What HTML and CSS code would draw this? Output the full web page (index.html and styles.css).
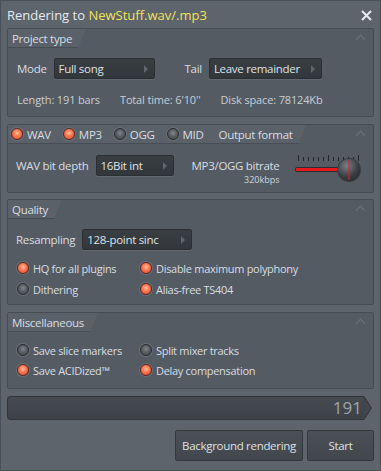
FILE: index.html
```html
<!DOCTYPE html>
<html lang="en">
<head>
    <meta charset="UTF-8">
    <title>Rendering</title>
    <link rel="stylesheet" href="styles.css">
</head>
<body>
<div class="ventana">
    <!-- Barra de titulo -->
    <div class="titulo">
        <span>Rendering to <span class="archivo">NewStuff.wav/.mp3</span></span>
        <svg class="cerrar" width="11" height="11" viewBox="0 0 11 11"><path d="M1 1L10 10M10 1L1 10" stroke="#e8ecf0" stroke-width="2"/></svg>
    </div>

    <!-- Project type -->
    <div class="panel p1">
        <div class="cabecera">
            <div class="pestana">Project type</div>
            <span class="chevron"></span>
        </div>
        <div class="fila modo">
            <span>Mode</span>
            <div class="selector s-modo">Full song<i></i></div>
            <span class="tail">Tail</span>
            <div class="selector s-tail">Leave remainder<i></i></div>
        </div>
        <div class="fila info">
            <span>Length: 191 bars</span>
            <span>Total time: 6'10''</span>
            <span>Disk space: 78124Kb</span>
        </div>
    </div>

    <!-- Output format -->
    <div class="panel p2">
        <div class="cabecera">
            <div class="pestana ancha">
                <label><b class="led on"></b>WAV</label>
                <label><b class="led on"></b>MP3</label>
                <label><b class="led"></b>OGG</label>
                <label><b class="led"></b>MID</label>
                <span class="etiqueta">Output format</span>
            </div>
            <span class="chevron"></span>
        </div>
        <div class="fila formato">
            <span class="alto">WAV bit depth</span>
            <div class="selector s-bits">16Bit int<i></i></div>
            <div class="bitrate">
                <span>MP3/OGG bitrate</span>
                <small>320kbps</small>
            </div>
            <svg class="slider" width="68" height="32" viewBox="0 0 68 32">
                <g stroke="#23272b" stroke-width="1">
                    <path d="M3.5 3v6M8.5 5v4M13.5 5v4M18.5 5v4M23.5 5v4M28.5 5v4M33.5 3v6M38.5 5v4M43.5 5v4M48.5 5v4M53.5 5v4M58.5 5v4M63.5 3v6"/>
                </g>
                <rect x="0" y="15" width="52" height="5" rx="2" fill="#2a2e32"/>
                <rect x="1" y="16" width="50" height="3" fill="#e8191c"/>
                <defs>
                    <radialGradient id="perilla" cx="0.4" cy="0.3" r="0.8">
                        <stop offset="0" stop-color="#7a8088"/>
                        <stop offset="0.6" stop-color="#3c4146"/>
                        <stop offset="1" stop-color="#25292d"/>
                    </radialGradient>
                </defs>
                <circle cx="54" cy="18" r="12" fill="#3a3f44"/>
                <circle cx="54" cy="18" r="11" fill="url(#perilla)"/>
                <path d="M54 8v20" stroke="#e8191c" stroke-width="1"/>
            </svg>
        </div>
    </div>

    <!-- Quality -->
    <div class="panel p3">
        <div class="cabecera">
            <div class="pestana">Quality</div>
            <span class="chevron"></span>
        </div>
        <div class="fila remuestreo">
            <span>Resampling</span>
            <div class="selector s-resamp">128-point sinc<i></i></div>
        </div>
        <div class="opciones">
            <label><b class="led on"></b>HQ for all plugins</label>
            <label><b class="led on"></b>Disable maximum polyphony</label>
            <label><b class="led"></b>Dithering</label>
            <label><b class="led on"></b>Alias-free TS404</label>
        </div>
    </div>

    <!-- Miscellaneous -->
    <div class="panel p4">
        <div class="cabecera">
            <div class="pestana">Miscellaneous</div>
            <span class="chevron"></span>
        </div>
        <div class="opciones">
            <label><b class="led"></b>Save slice markers</label>
            <label><b class="led"></b>Split mixer tracks</label>
            <label><b class="led on"></b>Save ACIDized™</label>
            <label><b class="led on"></b>Delay compensation</label>
        </div>
    </div>

    <!-- Progreso -->
    <div class="progreso">
        <div class="barra">191</div>
        <svg width="9" height="24" viewBox="0 0 9 24"><path d="M0 0.5H1L8.5 12L1 23.5H0" fill="#41464c" stroke="#30353a"/></svg>
    </div>

    <!-- Botones -->
    <div class="botones">
        <button>Background rendering</button>
        <button class="start">Start</button>
    </div>
</div>
</body>
</html>
```

FILE: styles.css
```css
/* Ventana principal */
body {
    margin: 0;
    font-family: "Open Sans", "Noto Sans", sans-serif;
    font-size: 11.5px;
    letter-spacing: -0.3px;
    color: #d8dde2;
}

.ventana {
    width: 381px;
    height: 471px;
    background-color: #5d646c;
    box-sizing: border-box;
    border: 1px solid #4a5057;
    display: flex;
    flex-direction: column;
}

/* Titulo */
.titulo {
    height: 27px;
    display: flex;
    align-items: center;
    justify-content: space-between;
    padding: 0 8px 0 6px;
    font-size: 13px;
    letter-spacing: 0;
    color: #e6eaee;
}
.archivo {
    color: #f2e25a;
}
.cerrar {
    margin-top: 1px;
}

/* Paneles */
.panel {
    margin: 0 6px 0 6px;
    background-color: #545b63;
    border: 1px solid #464c53;
    border-radius: 2px;
    display: flex;
    flex-direction: column;
}
.p1 { height: 87px; }
.p2 { height: 67px; margin-top: 7px; }
.p3 { height: 104px; margin-top: 6px; }
.p4 { height: 75px; margin-top: 7px; }

.cabecera {
    height: 19px;
    display: flex;
    justify-content: space-between;
    align-items: stretch;
}
.pestana {
    display: flex;
    align-items: center;
    padding: 0 14px 0 4px;
    background-color: #5a6168;
    border-bottom: 1px solid #474d54;
    clip-path: polygon(0 0, 100% 0, calc(100% - 8px) 100%, 0 100%);
}
.pestana.ancha {
    gap: 12px;
    padding-left: 3px;
    padding-right: 14px;
}
.pestana label {
    display: flex;
    align-items: center;
    gap: 4px;
}
.etiqueta {
    margin-left: 3px;
}
.chevron {
    width: 6px;
    height: 6px;
    margin: 7px 9px 0 0;
    border-left: 1px solid #6d747c;
    border-top: 1px solid #6d747c;
    transform: rotate(45deg);
}

/* Filas */
.fila {
    display: flex;
    align-items: center;
}
.modo {
    margin-top: 10px;
    padding-left: 9px;
}
.info {
    margin-top: 13px;
    padding-left: 9px;
    gap: 20px;
    font-size: 11px;
    letter-spacing: -0.15px;
    color: #c9ced4;
}
.formato {
    margin-top: 11px;
    padding: 0 10px 0 8px;
    align-items: flex-start;
}
.alto {
    line-height: 21px;
}
.remuestreo {
    margin-top: 10px;
    padding-left: 8px;
}

/* Selectores */
.selector {
    height: 21px;
    box-sizing: border-box;
    display: flex;
    align-items: center;
    justify-content: space-between;
    padding: 0 6px 0 4px;
    background: linear-gradient(#393e43, #32373c);
    border: 1px solid #2b2f33;
    border-radius: 2px;
    box-shadow: 0 1px 0 #62686f;
    color: #dfe3e7;
}
.selector i {
    width: 0;
    height: 0;
    border-top: 4px solid transparent;
    border-bottom: 4px solid transparent;
    border-left: 4px solid #5f666d;
}
.s-modo { width: 101px; margin-left: 7px; }
.tail { margin-left: 30px; }
.s-tail { width: 113px; margin-left: 7px; }
.s-bits { width: 78px; margin-left: 7px; }
.s-resamp { width: 110px; margin-left: 7px; }

.bitrate {
    display: flex;
    flex-direction: column;
    align-items: flex-end;
    margin-left: 18px;
}
.bitrate span {
    line-height: 21px;
}
.bitrate small {
    font-size: 9px;
    letter-spacing: 0;
    line-height: 8px;
    color: #d0d5da;
}
.slider {
    margin-left: auto;
    margin-top: -3px;
}

/* Opciones con led */
.opciones {
    display: grid;
    grid-template-columns: 123px 1fr;
    row-gap: 3px;
    padding-left: 9px;
    margin-top: 9px;
}
.p4 .opciones {
    margin-top: 9px;
    row-gap: 2px;
}
.opciones label {
    display: flex;
    align-items: center;
    gap: 4px;
    height: 18px;
    font-size: 11px;
}

.led {
    width: 12px;
    height: 12px;
    border-radius: 50%;
    box-sizing: border-box;
    border: 1px solid #2a2e32;
    background: radial-gradient(circle at 50% 40%, #80868c 0%, #5a5f64 45%, #3e4347 100%);
    box-shadow: 0 0 0 1px #6a7077;
}
.led.on {
    background: radial-gradient(circle at 50% 40%, #ffc0a0 0%, #ff7a55 40%, #d9452a 100%);
    border-color: #5a2a20;
}

/* Barra de progreso */
.progreso {
    display: flex;
    margin: 7px 0 0 6px;
    height: 24px;
}
.barra {
    width: 356px;
    box-sizing: border-box;
    background: linear-gradient(#464b51, #3d4247);
    border: 1px solid #30353a;
    border-right: none;
    border-radius: 4px 0 0 4px;
    text-align: right;
    padding-right: 1px;
    font-size: 17px;
    letter-spacing: 0;
    line-height: 22px;
    color: #9ea4aa;
}

/* Botones */
.botones {
    display: flex;
    justify-content: flex-end;
    gap: 4px;
    margin: 10px 6px 0 0;
}
button {
    height: 31px;
    width: 128px;
    font-family: "Open Sans", "Noto Sans", sans-serif;
    font-size: 11.5px;
    letter-spacing: -0.3px;
    white-space: nowrap;
    color: #dde1e5;
    background: linear-gradient(#4a5056, #42474d);
    border: 1px solid #33383d;
    border-radius: 2px;
}
button.start {
    width: 67px;
}
```
